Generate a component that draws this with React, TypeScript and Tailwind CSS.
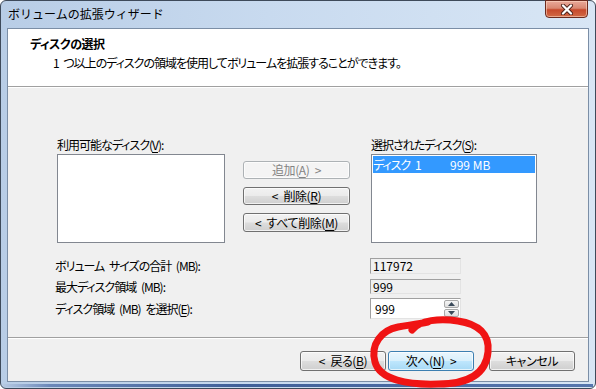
import React from "react";

function Key({ k }: { k: string }) {
  return <span className="underline underline-offset-2">{k}</span>;
}

function WinButton({
  children,
  disabled,
  primary,
  className = "",
}: {
  children: React.ReactNode;
  disabled?: boolean;
  primary?: boolean;
  className?: string;
}) {
  let look =
    "border-[#707070] bg-[linear-gradient(#f2f2f2_0%,#ebebeb_48%,#dddddd_52%,#cfcfcf_100%)] text-black";
  if (disabled) look = "border-[#adb2b5] bg-[#f4f4f4] text-[#838383]";
  if (primary)
    look =
      "border-[#3c7fb1] bg-[linear-gradient(#eaf6fd_0%,#d9f0fc_48%,#bee6fd_52%,#a7d9f5_100%)] text-black";
  return (
    <div
      className={`flex items-center justify-center rounded-[3px] border text-[12px] leading-[14px] tracking-[-0.4px] shadow-[inset_0_0_0_1px_rgba(255,255,255,0.7)] ${look} ${className}`}
    >
      {children}
    </div>
  );
}

function Field({ value, w }: { value: string; w: string }) {
  return (
    <div
      className={`${w} h-full border-t border-l border-[#a0a0a0] border-r border-b border-r-[#e3e3e3] border-b-[#e3e3e3] bg-[#f0f0f0] pl-[2px] text-[12px] leading-[14px] tracking-normal flex items-center`}
    >
      {value}
    </div>
  );
}

export default function App() {
  return (
    <div className="relative w-[596px] h-[389px] bg-white font-['Noto_Sans_CJK_JP',sans-serif] [font-feature-settings:'palt'] tracking-[-1px] [word-spacing:3px] text-black">
      <div className="w-full h-full flex flex-col rounded-[6px] border border-[#3e4a5a] bg-[linear-gradient(90deg,#b8cde6_0%,#c8daef_45%,#d8e6f5_100%)]">
        {/* title bar */}
        <div className="h-[27px] flex items-start px-[6px]">
          <div className="pl-[1px] pt-[5px] text-[12px] leading-[15px] text-black tracking-normal [font-feature-settings:normal]">
            ボリュームの拡張ウィザード
          </div>
          <div className="ml-auto mr-[1px] w-[43px] h-[18px] -mt-px rounded-b-[4px] border border-[#6b2a1e] bg-[linear-gradient(#e9a99a_0%,#d98872_45%,#c6492c_55%,#d26a45_100%)] shadow-[inset_0_0_0_1px_rgba(255,220,200,0.55)] flex items-center justify-center">
            <svg width="14" height="11" viewBox="0 0 14 11">
              <path d="M3 1.5 L11 9.5 M11 1.5 L3 9.5" stroke="#4a2018" strokeWidth="4" strokeLinecap="round" />
              <path d="M3 1.5 L11 9.5 M11 1.5 L3 9.5" stroke="#ffffff" strokeWidth="2.3" strokeLinecap="round" />
            </svg>
          </div>
        </div>

        {/* client area */}
        <div className="mx-[6px] flex-1 flex flex-col border border-[#7b8ea6] bg-[#f0f0f0]">
          {/* header */}
          <div className="h-[58px] bg-white border-b border-[#a0a0a0] flex flex-col">
            <div className="pl-[22px] pt-[8px] text-[12px] leading-[14px] font-bold tracking-[-0.5px]">
              ディスクの選択
            </div>
            <div className="pl-[45px] pt-[5px] text-[12px] leading-[14px]">
              1 つ以上のディスクの領域を使用してボリュームを拡張することができます。
            </div>
          </div>

          {/* body */}
          <div className="h-[250px] border-t border-white flex flex-col pt-[50px]">
            <div className="flex pl-[49px]">
              <div className="flex flex-col w-[168px]">
                <div className="h-[14px] text-[12px] leading-[14px] mb-[2px]">
                  利用可能なディスク(<Key k="V" />):
                </div>
                <div className="h-[89px] border border-[#828790] bg-white" />
              </div>
              <div className="ml-[18px] mt-[23px] flex flex-col gap-[8px] w-[107px]">
                <WinButton disabled className="h-[18px]">
                  追加(<Key k="A" />) &gt;
                </WinButton>
                <WinButton className="h-[18px]">
                  &lt; 削除(<Key k="R" />)
                </WinButton>
                <WinButton className="h-[19px]">
                  &lt; すべて削除(<Key k="M" />)
                </WinButton>
              </div>
              <div className="ml-[21px] flex flex-col w-[166px]">
                <div className="h-[14px] text-[12px] leading-[14px] mb-[2px]">
                  選択されたディスク(<Key k="S" />):
                </div>
                <div className="h-[89px] border border-[#828790] bg-white p-px">
                  <div className="h-[17px] bg-[#3399ff] text-white text-[12px] leading-[17px] flex">
                    <span className="w-[77px]">ディスク 1</span>
                    <span className="tracking-normal [word-spacing:normal]">999 MB</span>
                  </div>
                </div>
              </div>
            </div>

            <div className="pl-[47px] mt-[15px] flex flex-col">
              <div className="h-[16px] flex items-center">
                <div className="w-[315px] text-[12px] leading-[14px]">
                  ボリューム サイズの合計 (MB):
                </div>
                <Field value="117972" w="w-[91px]" />
              </div>
              <div className="h-[15px] mt-[5px] flex items-center">
                <div className="w-[315px] text-[12px] leading-[14px]">
                  最大ディスク領域 (MB):
                </div>
                <Field value="999" w="w-[91px]" />
              </div>
              <div className="h-[21px] mt-[4px] flex items-center">
                <div className="w-[315px] text-[12px] leading-[14px]">
                  ディスク領域 (MB) を選択(<Key k="E" />):
                </div>
                <div className="w-[91px] h-full flex border-t border-l border-[#a0a0a0] border-r border-b border-r-[#e3e3e3] border-b-[#e3e3e3] bg-white">
                  <div className="flex-1 pl-[4px] text-[12px] tracking-normal flex items-center">999</div>
                  <div className="w-[16px] flex flex-col gap-px py-px pr-px">
                    <div className="flex-1 rounded-[2px] border border-[#a8a8a8] bg-[linear-gradient(#f6f6f6,#dedede)] flex items-center justify-center">
                      <svg width="7" height="4" viewBox="0 0 7 4">
                        <path d="M0 4 L3.5 0 L7 4 Z" fill="#3a4a5a" />
                      </svg>
                    </div>
                    <div className="flex-1 rounded-[2px] border border-[#a8a8a8] bg-[linear-gradient(#f6f6f6,#dedede)] flex items-center justify-center">
                      <svg width="7" height="4" viewBox="0 0 7 4">
                        <path d="M0 0 L3.5 4 L7 0 Z" fill="#3a4a5a" />
                      </svg>
                    </div>
                  </div>
                </div>
              </div>
            </div>
          </div>

          {/* footer */}
          <div className="flex-1 border-t border-[#a0a0a0]">
            <div className="h-full border-t border-white flex items-start justify-end pt-[12px] pr-[13px]">
              <WinButton className="w-[86px] h-[20px]">
                &lt; 戻る(<Key k="B" />)
              </WinButton>
              <WinButton primary className="ml-[2px] w-[86px] h-[20px]">
                次へ(<Key k="N" />) &gt;
              </WinButton>
              <WinButton className="ml-[15px] w-[86px] h-[20px]">
                キャンセル
              </WinButton>
            </div>
          </div>
        </div>

        {/* bottom frame edge */}
        <div className="h-[6px] flex flex-col pt-[2px]">
          <div className="h-[3px] mx-[2px] bg-[linear-gradient(90deg,#b6c9e2_0%,#6a87b8_8%,#3f5f98_40%,#5676ad_100%)]" />
        </div>
      </div>

      {/* hand-drawn red circle */}
      <svg className="absolute left-0 top-0 pointer-events-none" width="596" height="389" viewBox="0 0 596 389">
        <path
          d="M412 330 C420 320 440 318 458 321 C478 324 490 334 488 352 C486 374 468 384 438 384 C408 385 380 380 375 362 C370 344 382 330 398 327 C410 325 418 324 428 322"
          fill="none"
          stroke="#f01414"
          strokeWidth="7"
          strokeLinecap="round"
          strokeLinejoin="round"
        />
      </svg>
    </div>
  );
}
